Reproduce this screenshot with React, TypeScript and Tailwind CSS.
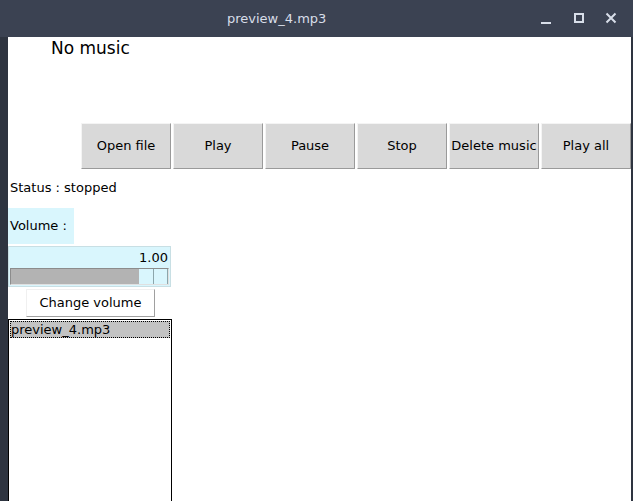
import React from "react"

const font = { fontFamily: '"DejaVu Sans", sans-serif' }

function TkButton({ label }: { label: string }) {
    return <div className="w-[90px] h-[46px] flex items-center justify-center bg-[#d9d9d9] border border-t-[#f4f4f4] border-l-[#f4f4f4] border-r-[#9a9a9a] border-b-[#9a9a9a] text-[13px] text-black whitespace-nowrap">{label}</div>
}

export default function App() {
    return <div className="w-[633px] h-[501px] bg-[#3b4252] flex flex-col overflow-hidden" style={font}>
        <div className="h-[37px] flex items-center relative shrink-0">
            <div className="absolute left-[227px] top-[9px] text-[13px] text-[#d8dee9]">preview_4.mp3</div>
            <div className="absolute left-[541px] top-[10px] w-[13px] h-[16px] flex items-end"><div className="w-[10px] h-[2px] bg-[#d8dee9] mb-[2px]"></div></div>
            <div className="absolute left-[574px] top-[13px] w-[10px] h-[10px] border-2 border-[#d8dee9]"></div>
            <svg className="absolute left-[605px] top-[12px]" width="12" height="12" viewBox="0 0 12 12"><path d="M1.5 1.5 L10.5 10.5 M10.5 1.5 L1.5 10.5" stroke="#d8dee9" strokeWidth="2" /></svg>
        </div>
        <div className="flex flex-1">
            <div className="w-[8px] bg-[#2e3440]"></div>
            <div className="flex-1 bg-white flex flex-col text-black">
                <div className="pl-[43px] h-[22px] text-[17px] leading-[22px]">No music</div>
                <div className="flex gap-[2px] ml-[73px] mt-[64px]">
                    <TkButton label="Open file" />
                    <TkButton label="Play" />
                    <TkButton label="Pause" />
                    <TkButton label="Stop" />
                    <TkButton label="Delete music" />
                    <TkButton label="Play all" />
                </div>
                <div className="pl-[2px] mt-[10px] h-[18px] leading-[18px] text-[13px]">Status : stopped</div>
                <div className="mt-[11px] w-[66px] h-[36px] bg-[#d9f6fd] text-[13px] flex items-center pl-[2px]">Volume :</div>
                <div className="mt-[2px] w-[163px] h-[41px] bg-[#d9f6fd] border border-[#c8dfe4] flex flex-col px-[1px]">
                    <div className="h-[21px] text-[13px] text-right pr-[1px] leading-[21px]">1.00</div>
                    <div className="h-[17px] bg-[#b3b3b3] border border-t-[#8c8c8c] border-l-[#8c8c8c] border-r-[#e0e0e0] border-b-[#e0e0e0] flex justify-end">
                        <div className="w-[15px] h-full bg-[#d9f6fd] border-r border-[#8ca6ab]"></div>
                        <div className="w-[14px] h-full bg-[#d9f6fd] border-r border-[#8ca6ab]"></div>
                    </div>
                </div>
                <div className="ml-[18px] mt-[2px] w-[129px] h-[28px] bg-white border border-t-[#f0f0f0] border-l-[#f0f0f0] border-r-[#a0a0a0] border-b-[#a0a0a0] flex items-center justify-center text-[13px]">Change volume</div>
                <div className="mt-[2px] w-[164px] flex-1 border border-black border-b-0 bg-white p-[1px]">
                    <div className="h-[17px] bg-[#c3c3c3] border border-dotted border-black text-[13px] leading-[15px]">preview_4.mp3</div>
                </div>
            </div>
            <div className="w-[2px] bg-[#2e3440]"></div>
        </div>
    </div>
}
